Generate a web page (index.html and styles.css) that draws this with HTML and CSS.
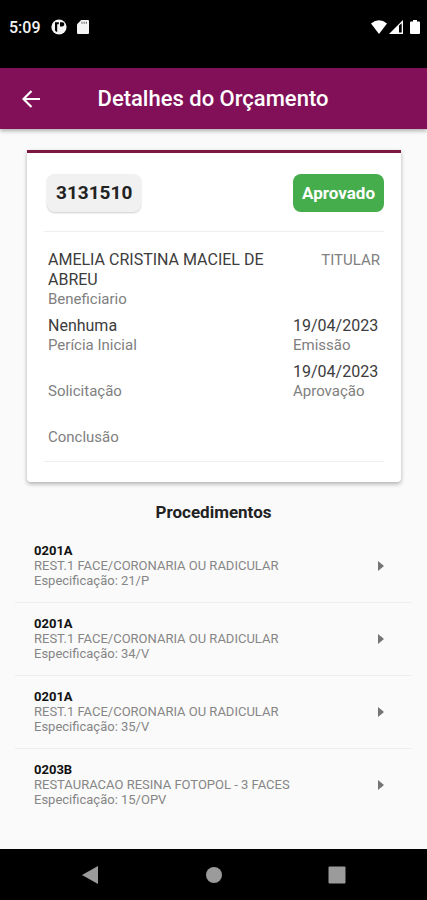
FILE: index.html
```
<!DOCTYPE html>
<html lang="pt-BR">
<head>
<meta charset="utf-8">
<meta name="viewport" content="width=device-width, initial-scale=1">
<title>Detalhes do Orçamento</title>
<link rel="stylesheet" href="styles.css">
</head>
<body>
<div class="status-bar">
  <span class="clock">5:09</span>
  <svg class="status-app" width="16" height="16" viewBox="0 0 16 16" aria-hidden="true"><circle cx="8" cy="8" r="7.6" fill="#f4f4f4"/><path d="M4 3.200h4v2H6.200V13A6 6 0 0 1 4 11.500zM9 3.200h2.200a2 2 0 0 1 0 4.300H9z" fill="#000"/><path d="M8.300 3v6" stroke="#f4f4f4"/></svg>
  <svg class="status-card" width="12" height="14" viewBox="0 0 12 14" aria-hidden="true"><path d="M4.2 0H11a1 1 0 0 1 1 1v12a1 1 0 0 1-1 1H1a1 1 0 0 1-1-1V4.2z" fill="#f4f4f4"/><path d="M5 1.8v2M7.2 1.8v2M9.4 1.8v2" stroke="#777" stroke-width="1.2"/></svg>
  <svg class="status-wifi" width="16" height="14" viewBox="0 0 16 14" aria-hidden="true"><path d="M0 3.4Q8-3 16 3.4L8 14z" fill="#fff"/></svg>
  <svg width="14" height="14" viewBox="0 0 14 14" aria-hidden="true"><path d="M0 14 14 0v14z" fill="#fff"/><path d="M10 5.5V12.5h2.7V3.2z" fill="#000"/></svg>
  <svg class="status-battery" width="10" height="14" viewBox="0 0 10 14" aria-hidden="true"><path d="M3 0h4v1.5h2a1 1 0 0 1 1 1V13a1 1 0 0 1-1 1H1a1 1 0 0 1-1-1V2.500a1 1 0 0 1 1-1h2z" fill="#fff"/></svg>
</div>
<header class="app-bar">
  <button class="back" type="button" aria-label="Voltar"><svg width="18" height="18" viewBox="0 0 18 18" aria-hidden="true"><path d="M18 9H1.500M9.500 1 1.500 9l8 8" fill="none" stroke="#fff" stroke-width="2.200"/></svg></button>
  <h1>Detalhes do Orçamento</h1>
</header>
<main>
  <section class="card">
    <div class="card-head">
      <span class="chip number">3131510</span>
      <span class="chip approved">Aprovado</span>
    </div>
    <dl class="details">
      <div><dd>AMELIA CRISTINA MACIEL DE ABREU</dd><dt>Beneficiario</dt></div>
      <div class="holder"><dt>TITULAR</dt></div>
      <div><dd>Nenhuma</dd><dt>Perícia Inicial</dt></div>
      <div><dd>19/04/2023</dd><dt>Emissão</dt></div>
      <div><dd></dd><dt>Solicitação</dt></div>
      <div><dd>19/04/2023</dd><dt>Aprovação</dt></div>
      <div><dd></dd><dt>Conclusão</dt></div>
    </dl>
  </section>
  <h2>Procedimentos</h2>
  <ul class="procedures">
    <li><a href="#p1"><span class="text"><strong>0201A</strong><span>REST.1 FACE/CORONARIA OU RADICULAR</span><span>Especificação: 21/P</span></span><svg width="6" height="10" viewBox="0 0 6 10" aria-hidden="true"><path d="M0 0 6 5 0 10z" fill="#747474"/></svg></a></li>
    <li><a href="#p2"><span class="text"><strong>0201A</strong><span>REST.1 FACE/CORONARIA OU RADICULAR</span><span>Especificação: 34/V</span></span><svg width="6" height="10" viewBox="0 0 6 10" aria-hidden="true"><path d="M0 0 6 5 0 10z" fill="#747474"/></svg></a></li>
    <li><a href="#p3"><span class="text"><strong>0201A</strong><span>REST.1 FACE/CORONARIA OU RADICULAR</span><span>Especificação: 35/V</span></span><svg width="6" height="10" viewBox="0 0 6 10" aria-hidden="true"><path d="M0 0 6 5 0 10z" fill="#747474"/></svg></a></li>
    <li><a href="#p4"><span class="text"><strong>0203B</strong><span>RESTAURACAO RESINA FOTOPOL - 3 FACES</span><span>Especificação: 15/OPV</span></span><svg width="6" height="10" viewBox="0 0 6 10" aria-hidden="true"><path d="M0 0 6 5 0 10z" fill="#747474"/></svg></a></li>
  </ul>
</main>
<nav class="system-nav" aria-label="Sistema">
  <button type="button" aria-label="Voltar"><svg width="18" height="18" viewBox="0 0 18 18"><path d="M1 9 17 0v18z" fill="#9b9b9b"/></svg></button>
  <button type="button" aria-label="Início"><svg width="18" height="18" viewBox="0 0 18 18"><circle cx="9" cy="9" r="8" fill="#9b9b9b"/></svg></button>
  <button type="button" aria-label="Recentes"><svg width="18" height="18" viewBox="0 0 18 18"><rect x=".5" y=".5" width="17" height="17" rx="1" fill="#9b9b9b"/></svg></button>
</nav>
</body>
</html>
```
FILE: styles.css
```
* { box-sizing: border-box; }

body {
  margin: 0;
  min-height: 100vh;
  display: flex;
  flex-direction: column;
  background: #fafafa;
  color: #3c3c3c;
  font-family: Roboto, "Liberation Sans", sans-serif;
}

svg { display: block; flex: none; }

h1, h2, ul, dl, dd, dt { margin: 0; padding: 0; }

button { border: 0; padding: 0; background: none; }

.status-bar {
  display: flex;
  align-items: center;
  height: 68px;
  padding: 0 7px 14px 9px;
  background: #000;
}

.clock {
  color: #f4f4f4;
  font-size: 16px;
  font-weight: 500;
}

.status-app { margin-left: 10px; }
.status-card { margin-left: 10px; }
.status-wifi { margin-left: auto; margin-right: 2px; }
.status-battery { margin-left: 7px; }

.app-bar {
  display: grid;
  grid-template-columns: 40px 1fr 40px;
  align-items: center;
  height: 61px;
  padding: 0 12px 0 11px;
  background: #811058;
  box-shadow: 0 2px 4px rgba(0, 0, 0, 0.3);
}

.back {
  display: grid;
  place-items: center;
  height: 40px;
}

h1 {
  color: #fff;
  font-size: 22px;
  font-weight: 500;
  text-align: center;
}

main { flex: 1; }

.card {
  margin: 21px 26px 0 27px;
  padding: 21px 17px 20px;
  border-top: 3px solid #7b1741;
  border-radius: 0 0 4px 4px;
  background: #fff;
  box-shadow: 0 2px 4px rgba(0, 0, 0, 0.3);
}

.card-head {
  display: flex;
  align-items: center;
  justify-content: space-between;
  padding: 0 0 19px 3px;
  border-bottom: 1px solid #eee;
}

.chip {
  padding: 0 9px;
  border-radius: 8px;
  font-size: 17px;
  font-weight: 700;
  line-height: 38px;
}

.number {
  background: #f1f1f1;
  color: #222;
  font-size: 19px;
  box-shadow: 0 1px 2px rgba(0, 0, 0, 0.2);
}

.approved {
  background: #46ad4c;
  color: #fff;
}

.details {
  display: grid;
  grid-template-columns: 1fr 87px;
  gap: 8px 20px;
  padding: 18px 4px 15px;
  border-bottom: 1px solid #eee;
}

dd {
  min-height: 20px;
  font-size: 16px;
  line-height: 20px;
}

dt {
  color: #808080;
  font-size: 15px;
  line-height: 18px;
}

.holder { text-align: right; }
.holder dt { line-height: 20px; }

h2 {
  margin-top: 18px;
  color: #222;
  font-size: 17px;
  font-weight: 700;
  line-height: 24px;
  text-align: center;
}

.procedures {
  margin: 6px 15px 0;
  list-style: none;
}

.procedures li + li { border-top: 1px solid #eee; }

.procedures a {
  display: flex;
  align-items: center;
  justify-content: space-between;
  padding: 13px 28px 14px 19px;
  color: #868686;
  font-size: 13px;
  line-height: 15px;
  text-decoration: none;
}

.text { display: grid; }

.text strong {
  color: #111;
  font-weight: 700;
}

.system-nav {
  display: flex;
  align-items: center;
  justify-content: space-between;
  height: 51px;
  padding: 0 81px;
  background: #000;
}
```
